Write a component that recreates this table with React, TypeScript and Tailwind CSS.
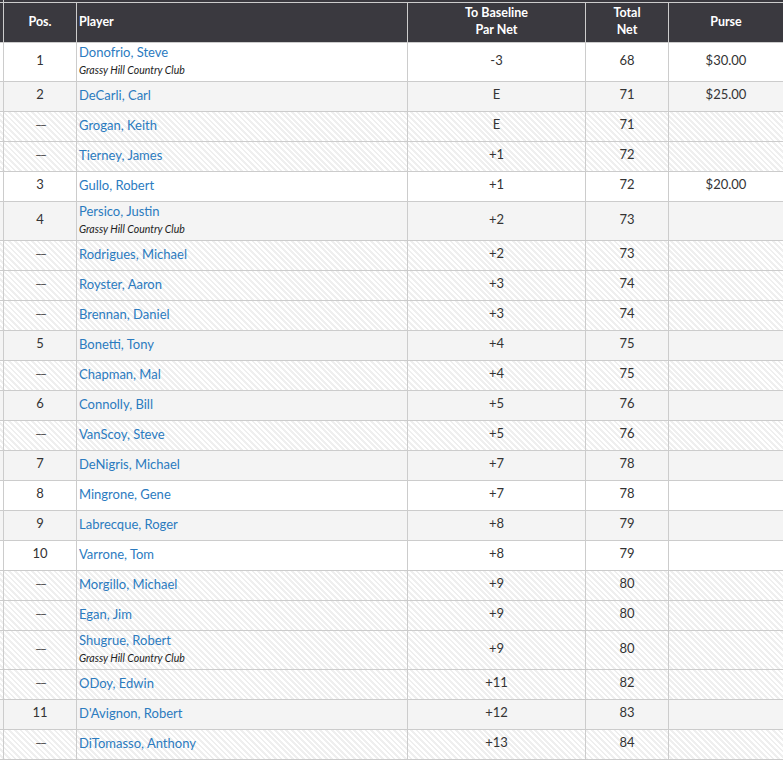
type Row = {
  pos: string;
  name: string;
  club?: string;
  toPar: string;
  total: number;
  purse?: string;
};

const rows: Row[] = [
  { pos: "1", name: "Donofrio, Steve", club: "Grassy Hill Country Club", toPar: "-3", total: 68, purse: "$30.00" },
  { pos: "2", name: "DeCarli, Carl", toPar: "E", total: 71, purse: "$25.00" },
  { pos: "--", name: "Grogan, Keith", toPar: "E", total: 71 },
  { pos: "--", name: "Tierney, James", toPar: "+1", total: 72 },
  { pos: "3", name: "Gullo, Robert", toPar: "+1", total: 72, purse: "$20.00" },
  { pos: "4", name: "Persico, Justin", club: "Grassy Hill Country Club", toPar: "+2", total: 73 },
  { pos: "--", name: "Rodrigues, Michael", toPar: "+2", total: 73 },
  { pos: "--", name: "Royster, Aaron", toPar: "+3", total: 74 },
  { pos: "--", name: "Brennan, Daniel", toPar: "+3", total: 74 },
  { pos: "5", name: "Bonetti, Tony", toPar: "+4", total: 75 },
  { pos: "--", name: "Chapman, Mal", toPar: "+4", total: 75 },
  { pos: "6", name: "Connolly, Bill", toPar: "+5", total: 76 },
  { pos: "--", name: "VanScoy, Steve", toPar: "+5", total: 76 },
  { pos: "7", name: "DeNigris, Michael", toPar: "+7", total: 78 },
  { pos: "8", name: "Mingrone, Gene", toPar: "+7", total: 78 },
  { pos: "9", name: "Labrecque, Roger", toPar: "+8", total: 79 },
  { pos: "10", name: "Varrone, Tom", toPar: "+8", total: 79 },
  { pos: "--", name: "Morgillo, Michael", toPar: "+9", total: 80 },
  { pos: "--", name: "Egan, Jim", toPar: "+9", total: 80 },
  { pos: "--", name: "Shugrue, Robert", club: "Grassy Hill Country Club", toPar: "+9", total: 80 },
  { pos: "--", name: "ODoy, Edwin", toPar: "+11", total: 82 },
  { pos: "11", name: "D'Avignon, Robert", toPar: "+12", total: 83 },
  { pos: "--", name: "DiTomasso, Anthony", toPar: "+13", total: 84 },
];

const cell = "flex items-center border-r border-[#cccccc] shrink-0";

export default function App() {
  return (
    <div className="w-[783px] h-[761px] overflow-hidden bg-white font-['Lato','Liberation_Sans',sans-serif] text-[13px] text-[#333333]">
      {/* header */}
      <div className="flex h-[3px] bg-[#3a393f] border-b border-[#cccccc]">
        <div className={`${cell} w-[4px]`} />
      </div>
      <div className="flex h-[40px] bg-[#3a393f] border-b border-[#cccccc] text-white font-bold text-[12.5px] leading-[17px]">
        <div className={`${cell} w-[4px]`} />
        <div className={`w-[73px] justify-center pb-[3px] ${cell} border-[#555]`}>Pos.</div>
        <div className={`w-[331px] pl-[2px] pb-[3px] ${cell} border-[#555]`}>Player</div>
        <div className={`w-[178px] justify-center text-center pb-[4px] ${cell} border-[#555]`}>
          To Baseline
          <br />
          Par Net
        </div>
        <div className={`w-[83px] justify-center text-center pb-[4px] ${cell} border-[#555]`}>
          Total
          <br />
          Net
        </div>
        <div className="flex flex-1 items-center justify-center pb-[3px]">Purse</div>
      </div>

      {rows.map((r, i) => {
        const tie = r.pos === "--";
        const bg = tie
          ? "bg-[repeating-linear-gradient(45deg,#ffffff_0px,#ffffff_2px,#efefef_2px,#efefef_4px)]"
          : i % 2 === 0
            ? "bg-white"
            : "bg-[#f4f4f4]";
        const pad = r.club ? "" : "pb-[3px]";
        return (
          <div
            key={r.name}
            className={`flex border-b border-[#cccccc] ${r.club ? "h-[39px]" : "h-[30px]"} ${bg}`}
          >
            <div className={`${cell} w-[4px]`} />
            <div className={`w-[73px] justify-center ${cell} ${r.club ? "pb-[2px]" : pad}`}>
              {tie ? <span className="text-[12px] tracking-[-2px]">––</span> : r.pos}
            </div>
            <div className={`w-[331px] pl-[2px] flex-col !items-start justify-center ${cell} ${pad}`}>
              <span className="text-[#2b7bbf] leading-[16px]">{r.name}</span>
              {r.club && (
                <span className="italic text-[10.5px] leading-[20px] text-[#222222]">{r.club}</span>
              )}
            </div>
            <div className={`w-[178px] justify-center ${cell} ${r.club ? "pb-[2px]" : pad}`}>{r.toPar}</div>
            <div className={`w-[83px] justify-center ${cell} ${r.club ? "pb-[2px]" : pad}`}>{r.total}</div>
            <div className={`flex flex-1 items-center justify-center ${r.club ? "pb-[2px]" : pad}`}>{r.purse}</div>
          </div>
        );
      })}
    </div>
  );
}
